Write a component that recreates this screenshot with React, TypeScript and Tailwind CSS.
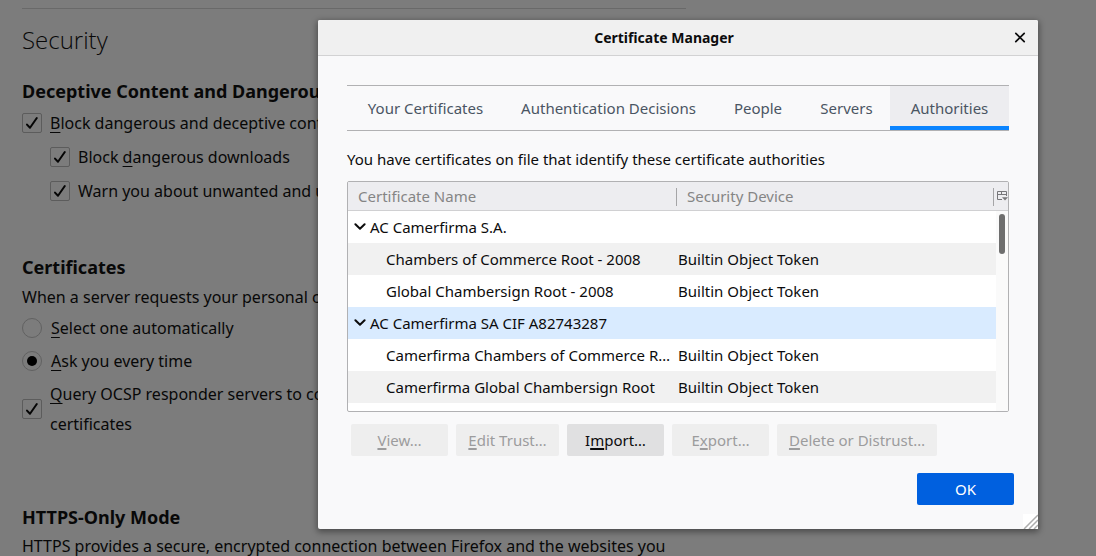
import { Fragment, useState, type ReactNode } from "react";

function Key({ children }: { children: ReactNode }) {
  return <span className="underline decoration-1 underline-offset-3">{children}</span>;
}

function CheckRow({ id, children, className = "h-[34px]" }: { id: string; children: ReactNode; className?: string }) {
  return (
    <div className={`flex items-center gap-2 ${className}`}>
      <span className="grid size-5 shrink-0 place-items-center">
        <input
          id={id}
          type="checkbox"
          defaultChecked
          className="peer col-start-1 row-start-1 size-5 appearance-none rounded-xs border border-[#5c5c5c]"
        />
        <svg
          viewBox="0 0 20 20"
          className="pointer-events-none invisible col-start-1 row-start-1 size-5 peer-checked:visible"
          fill="none"
          stroke="#050505"
          strokeWidth="2"
          strokeLinecap="round"
          strokeLinejoin="round"
        >
          <path d="M5 11.6 8 14.8 14.8 5" />
        </svg>
      </span>
      <label htmlFor={id}>{children}</label>
    </div>
  );
}

function RadioRow({ id, checked, children }: { id: string; checked?: boolean; children: ReactNode }) {
  return (
    <div className="flex h-[33px] items-center gap-[9px]">
      <span className="grid size-5 shrink-0 place-items-center">
        <input
          id={id}
          type="radio"
          name="client-cert"
          defaultChecked={checked}
          className="peer col-start-1 row-start-1 size-5 appearance-none rounded-full border border-[#616161]"
        />
        <span className="pointer-events-none invisible col-start-1 row-start-1 size-2.5 rounded-full bg-black peer-checked:visible" />
      </span>
      <label htmlFor={id}>{children}</label>
    </div>
  );
}

const tabs = ["Your Certificates", "Authentication Decisions", "People", "Servers", "Authorities"];

const groups = [
  { name: "AC Camerfirma S.A.", certs: ["Chambers of Commerce Root - 2008", "Global Chambersign Root - 2008"] },
  {
    name: "AC Camerfirma SA CIF A82743287",
    certs: ["Camerfirma Chambers of Commerce Root", "Camerfirma Global Chambersign Root"],
  },
];

function Preferences() {
  return (
    <main className="mx-[22px] max-w-[664px] pt-2 text-base leading-[30px] text-[#080808]">
      <hr className="border-[#696969]" />
      <h1 className="mt-[15px] font-['Open_Sans',sans-serif] text-2xl leading-8 font-light">Security</h1>
      <h2 className="mt-5 text-lg leading-[30px] font-bold">Deceptive Content and Dangerous Software Protection</h2>
      <CheckRow id="block-content">
        <Key>B</Key>lock dangerous and deceptive content
      </CheckRow>
      <div className="pl-7">
        <CheckRow id="block-downloads">
          Block <Key>d</Key>angerous downloads
        </CheckRow>
        <CheckRow id="warn-software">
          Warn you about unwanted and un<Key>c</Key>ommon software
        </CheckRow>
      </div>
      <h2 className="mt-11 text-lg leading-[30px] font-bold">Certificates</h2>
      <p>When a server requests your personal certificate</p>
      <div className="-mt-px">
        <RadioRow id="select-auto">
          <Key>S</Key>elect one automatically
        </RadioRow>
        <RadioRow id="ask-always" checked>
          <Key>A</Key>sk you every time
        </RadioRow>
      </div>
      <CheckRow id="ocsp" className="mt-0.5 pr-[120px]">
        <Key>Q</Key>uery OCSP responder servers to confirm the current validity of certificates
      </CheckRow>
      <h2 className="mt-[63px] text-lg leading-[30px] font-bold">HTTPS-Only Mode</h2>
      <p className="leading-7 whitespace-nowrap">
        HTTPS provides a secure, encrypted connection between Firefox and the websites you
      </p>
    </main>
  );
}

function CertificateTree() {
  return (
    <div className="relative mt-2 h-[231px] overflow-hidden rounded-xs border border-[#b1b1b3] bg-white">
      <table className="w-full table-fixed border-collapse text-left">
        <colgroup>
          <col className="w-[329px]" />
          <col />
          <col className="w-3.5" />
        </colgroup>
        <thead className="bg-[#ededf0] text-[#858585]">
          <tr className="h-[29px] shadow-[inset_0_-1px_#d0d0d2]">
            <th className="p-0 font-normal">
              <span className="block h-[18px] border-r border-[#a5a5a7] pl-2.5 leading-4">Certificate Name</span>
            </th>
            <th className="p-0 font-normal">
              <span className="block h-[18px] border-r border-[#a5a5a7] pl-2.5 leading-4">Security Device</span>
            </th>
            <th className="p-0">
              <button aria-label="Select columns to display" className="block pl-[3px]">
                <svg viewBox="0 0 11 11" className="size-[11px]" fill="none" stroke="#77777a">
                  <path d="M5 8.5H.5v-8h9V5M.5 3.5h9M4.5.5v3" />
                  <path d="M5 6.2h6L8 9.6z" fill="#77777a" stroke="none" />
                </svg>
              </button>
            </th>
          </tr>
        </thead>
        <tbody className="text-[#0c0c0d]">
          {groups.map((group, g) => (
            <Fragment key={group.name}>
              <tr className={g === 1 ? "h-8 bg-[#d9ebff]" : "h-8"}>
                <td colSpan={3} className="p-0">
                  <span className="flex items-center gap-1 pl-1.5">
                    <svg
                      viewBox="0 0 12 12"
                      className="size-3"
                      fill="none"
                      stroke="currentColor"
                      strokeWidth="2"
                      strokeLinecap="round"
                      strokeLinejoin="round"
                    >
                      <path d="M1.4 3.2 6 7.8l4.6-4.6" />
                    </svg>
                    {group.name}
                  </span>
                </td>
              </tr>
              {group.certs.map((cert, i) => (
                <tr key={cert} className={(g * 3 + i) % 2 === 0 ? "h-8 bg-[#f1f1f1]" : "h-8"}>
                  <td className="truncate p-0 pl-[38px]">{cert}</td>
                  <td colSpan={2} className="p-0 pl-px">
                    Builtin Object Token
                  </td>
                </tr>
              ))}
            </Fragment>
          ))}
        </tbody>
      </table>
      <div className="absolute top-[29px] right-0 bottom-0 w-3 bg-[#fafafa] pt-[3px] pl-[3px]">
        <div className="h-10 w-1.5 rounded-full bg-[#6e6e6e]" />
      </div>
    </div>
  );
}

function ActionButton({ className, disabled, before, accessKey, after }: {
  className: string;
  disabled?: boolean;
  before?: string;
  accessKey: string;
  after: string;
}) {
  return (
    <button
      disabled={disabled}
      className={`h-8 rounded-xs bg-[#e0e0e1] whitespace-nowrap text-[#0c0c0d] disabled:bg-[#eeeeee] disabled:text-[#9c9c9d] ${className}`}
    >
      {before}
      <span className="underline decoration-2 underline-offset-2">{accessKey}</span>
      {after}
    </button>
  );
}

function CertificateManager() {
  const [active, setActive] = useState("Authorities");
  return (
    <section
      role="dialog"
      aria-labelledby="dialog-title"
      className="relative rounded-xs bg-[#f9f9fa] text-[15px] leading-5 text-[#0c0c0d] shadow-[0_2px_6px_1px_rgba(0,0,0,0.4)]"
    >
      <header className="flex h-9 items-center gap-1 rounded-t-xs border-b border-[#d2d2d3] bg-[#f0f0f0] pr-3">
        <h2 id="dialog-title" className="flex-1 text-center text-sm font-bold">
          Certificate Manager
        </h2>
        <button aria-label="Close" className="grid h-6 w-3 place-items-center">
          <svg viewBox="0 0 12 12" className="size-3" stroke="#0c0c0d" strokeWidth="1.7" strokeLinecap="round">
            <path d="M1.8 1.3l8.4 8.4M10.2 1.3l-8.4 8.4" />
          </svg>
        </button>
      </header>
      <div className="px-[29px] pt-[29px]">
        <div role="tablist" className="grid grid-cols-[157fr_209fr_90fr_87fr_119fr] border-y border-[#b1b1b3]">
          {tabs.map((tab) => (
            <button
              key={tab}
              role="tab"
              aria-selected={tab === active}
              onClick={() => setActive(tab)}
              className="h-11 border-b-4 border-transparent pt-1 whitespace-nowrap text-[#4a5563] aria-selected:border-[#0a84ff] aria-selected:bg-[#ededf0]"
            >
              {tab}
            </button>
          ))}
        </div>
        <p className="mt-[18px]">You have certificates on file that identify these certificate authorities</p>
        <div className="mt-3">
          <CertificateTree />
        </div>
        <div className="mt-3 flex gap-2 pl-1">
          <ActionButton disabled className="w-[97px]" accessKey="V" after="iew…" />
          <ActionButton disabled className="w-[103px]" accessKey="E" after="dit Trust…" />
          <ActionButton className="w-[97px]" before="I" accessKey="m" after="port…" />
          <ActionButton disabled className="w-[97px]" before="E" accessKey="x" after="port…" />
          <ActionButton disabled className="w-40" accessKey="D" after="elete or Distrust…" />
        </div>
      </div>
      <footer className="flex justify-end px-6 pt-[17px] pb-6">
        <button className="h-8 w-[97px] rounded-xs bg-[#0060df] text-white">OK</button>
      </footer>
      <svg viewBox="0 0 15 15" className="absolute right-0 bottom-0 size-[15px] bg-white" stroke="#adadad" strokeWidth="1.5">
        <path d="M1 15 15 1M6 15l9-9M11 15l4-4" />
      </svg>
    </section>
  );
}

export default function App() {
  return (
    <div className="relative h-screen overflow-hidden bg-[#7c7c7c] font-['Noto_Sans',sans-serif]">
      <Preferences />
      <div className="absolute inset-0 pt-5 pr-[58px] pl-[318px]">
        <CertificateManager />
      </div>
    </div>
  );
}
